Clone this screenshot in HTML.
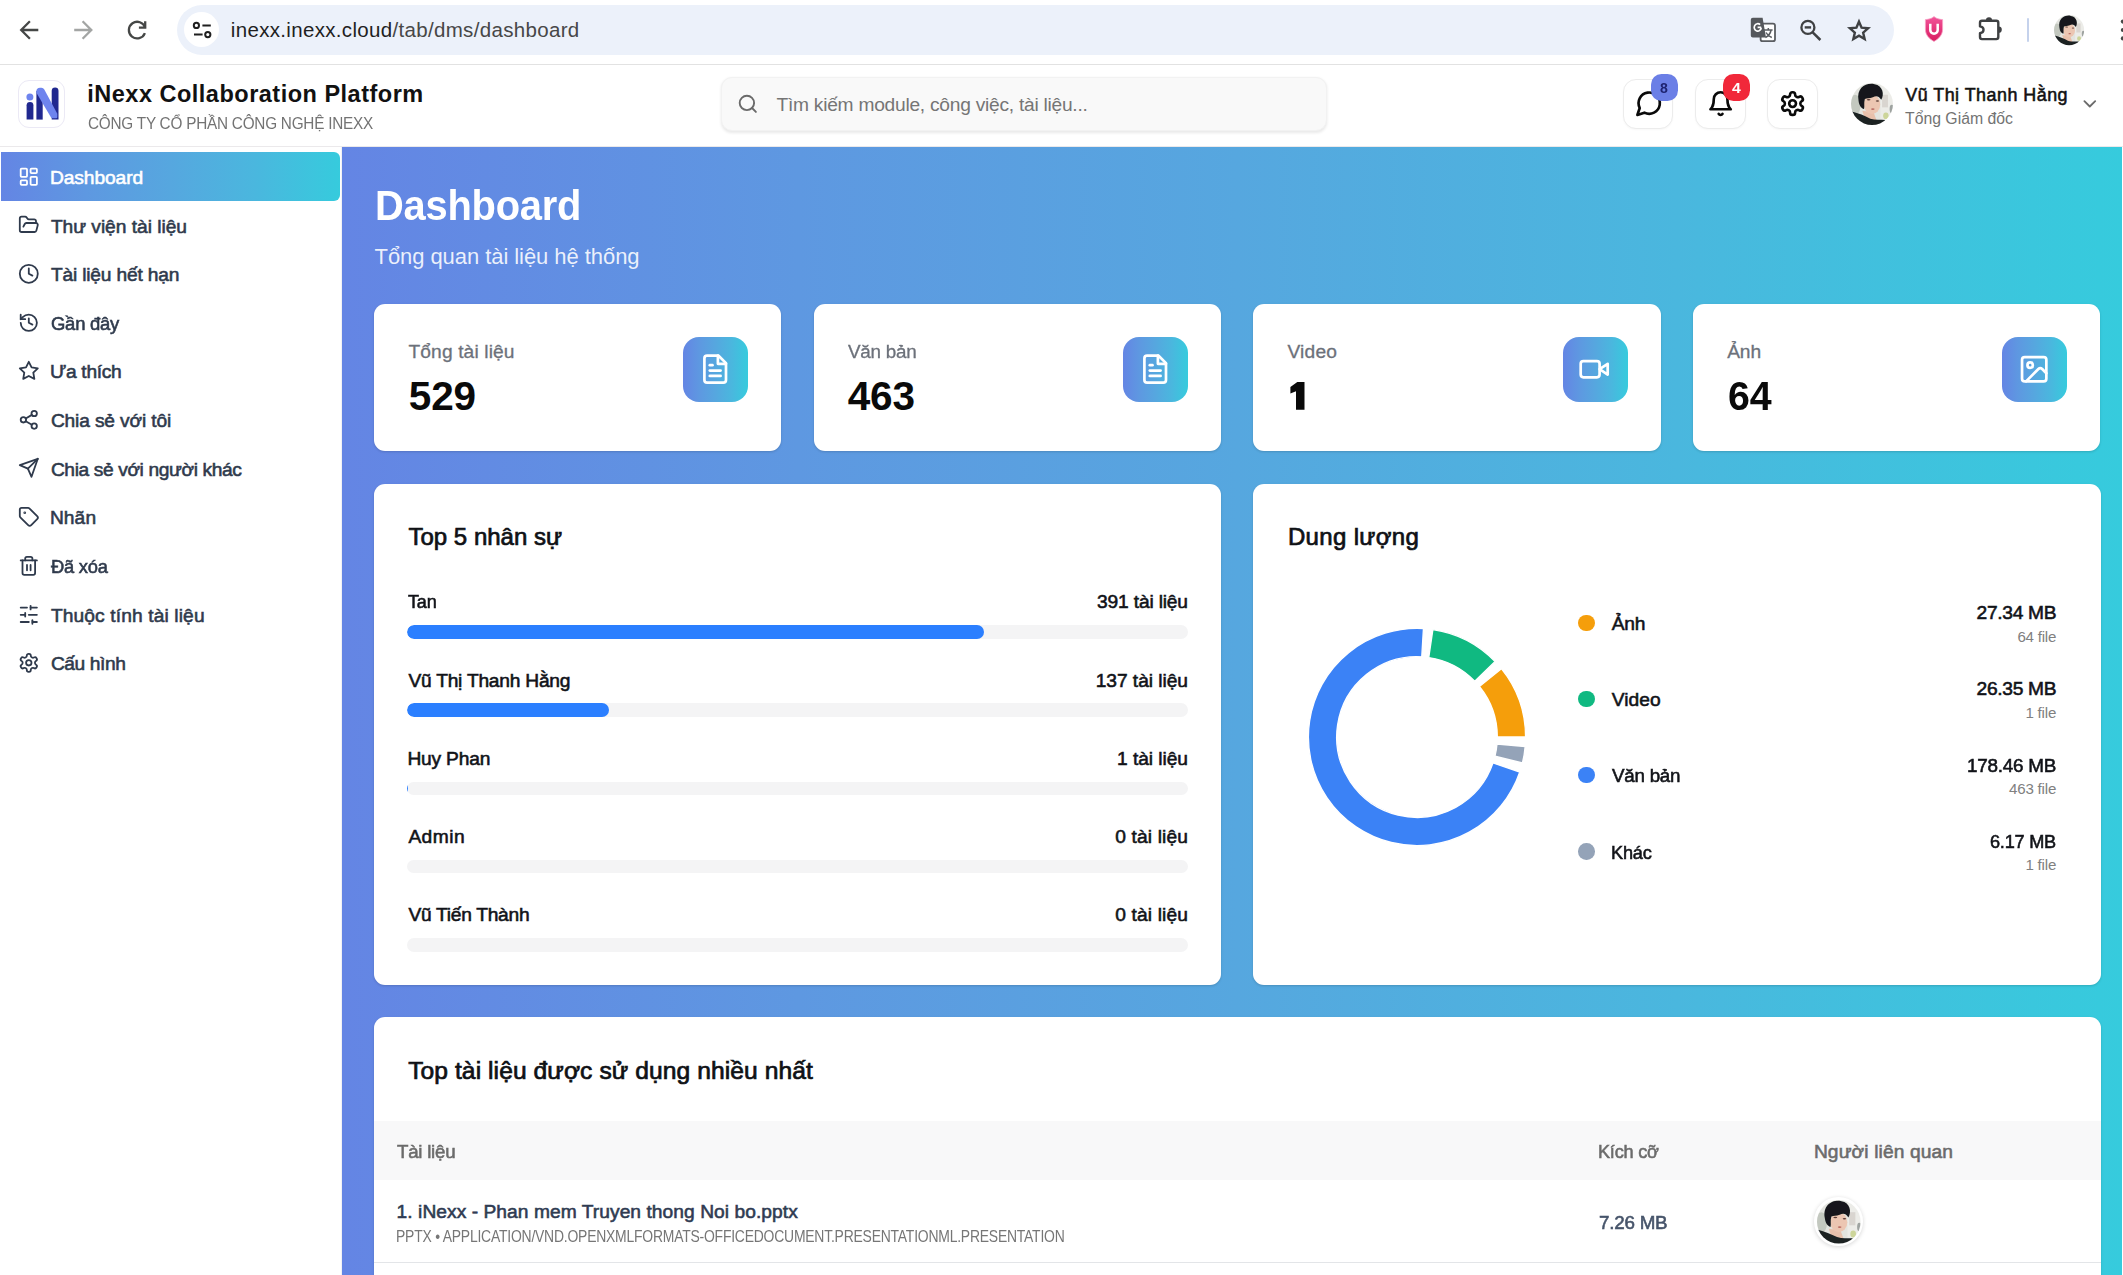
<!DOCTYPE html>
<html lang="vi"><head><meta charset="utf-8"><title>iNexx Collaboration Platform - Dashboard</title>
<style>
*{box-sizing:border-box;margin:0;padding:0}
html,body{width:2123px;height:1275px;overflow:hidden;background:#fff;font-family:"Liberation Sans",sans-serif}
body{position:relative}
.t{position:absolute;white-space:nowrap;line-height:1;-webkit-text-stroke-color:currentColor}
.a{position:absolute}
.card{position:absolute;background:#fff;border-radius:11px;box-shadow:0 1px 3px rgba(0,0,0,.10),0 1px 2px rgba(0,0,0,.06)}
.ib{position:absolute;width:64.8px;height:64.8px;border-radius:16px;background:linear-gradient(90deg,#6485e4 0%,#5e98e1 25%,#56a7df 50%,#4ab7de 75%,#36cbdd 100%)}
.hb{position:absolute;top:79px;width:50.2px;height:49.6px;border-radius:13px;border:1px solid #ececec;background:#fff;box-shadow:0 1px 2px rgba(0,0,0,.03)}
.trk{position:absolute;left:406.9px;width:781.1px;height:13.6px;border-radius:7px;background:#f4f4f5;overflow:hidden}
.trk i{display:block;height:100%;border-radius:7px;background:#2b7fff}
.dot{position:absolute;width:16.6px;height:16.6px;border-radius:50%;left:1578.1px}
svg{position:absolute;overflow:visible}
</style></head><body>
<div class="a" style="left:0;top:0;width:2123px;height:64px;background:#fff"></div>
<div class="a" style="left:0;top:64px;width:2123px;height:1px;background:#e2e2e2"></div>
<svg style="left:0;top:0" width="170" height="64" viewBox="0 0 170 64" fill="none" stroke-width="2.3" stroke-linecap="butt" stroke-linejoin="miter"><path d="M38.3 30H21.5M29.9 21.3L21.2 30l8.7 8.7" stroke="#454746"/><path d="M74.2 30H91M82.6 21.3l8.7 8.7-8.7 8.7" stroke="#a3a5a4"/></svg>
<svg style="left:120px;top:14px" width="34" height="34" viewBox="120 14 34 34" fill="none" stroke="#454746" stroke-width="2.3"><path d="M144.900 33.100A8.300 8.300 0 1 1 145.100 27.600"/><path d="M145.200 21.200V27.700H138.900"/></svg>
<div class="a" style="left:177px;top:4.5px;width:1717px;height:50px;border-radius:25px;background:#ecf1fa"></div>
<div class="a" style="left:184px;top:12px;width:35.4px;height:35.4px;border-radius:50%;background:#fff"></div>
<svg style="left:184px;top:12px" width="36" height="36" viewBox="184 12 36 36" fill="none" stroke="#1f1f1f" stroke-width="2"><circle cx="196.4" cy="25.4" r="2.6"/><path d="M202.4 25.4h8.4M194 34.6h8.6"/><circle cx="207.8" cy="34.6" r="2.6"/></svg>
<svg style="left:1748px;top:14px" width="32" height="32" viewBox="1748 14 32 32"><rect x="1760.6" y="23.6" width="14.4" height="17.6" rx="2" fill="#fff" stroke="#5a5d61" stroke-width="1.8"/><path d="M1764 30h8.6M1768.3 28v2M1765.5 37.5c3-1.6 5-4.2 5.6-7.5M1766 32.5c1 2 3 4 5.8 5" fill="none" stroke="#5a5d61" stroke-width="1.5"/><path d="M1752.8 17.8h9.8l3.4 19.8h-13.2a2 2 0 0 1-2-2v-15.8a2 2 0 0 1 2-2z" fill="#55585c"/><path d="M1761.2 27.4h-3.6M1761.2 27.6a3.5 3.7 0 1 1-1.1-2.9" fill="none" stroke="#fff" stroke-width="1.7"/></svg>
<svg style="left:1795px;top:15px" width="32" height="32" viewBox="1795 15 32 32" fill="none" stroke="#3f4143" stroke-width="2.3"><circle cx="1807.9" cy="27.4" r="6.500"/><path d="M1812.7 32.4l7.700 7.600" stroke-width="2.500"/><path d="M1804.700 27.400h6.400" stroke-width="2.400"/></svg>
<svg style="left:1845.8px;top:16.6px" width="26" height="26" viewBox="0 0 24 24" fill="none" stroke="#3f4143" stroke-width="2.25" stroke-linejoin="miter"><path d="M12 4.300l2.400 5.600 6 .550-4.550 4 1.350 5.900L12 17.200l-5.200 3.150 1.350-5.900-4.550-4 6-.550z"/></svg>
<svg style="left:1922px;top:15px" width="24" height="28" viewBox="1922 15 24 28"><defs><linearGradient id="sh" x1="0" y1="0" x2="0" y2="1"><stop offset="0" stop-color="#f2559a"/><stop offset="1" stop-color="#d81b60"/></linearGradient></defs><path d="M1934 16.600c-2.800 2.400-6 2.700-8.600 3v9.600c0 6.100 4.400 9.900 8.600 12.200 4.200-2.300 8.600-6.100 8.600-12.200v-9.600c-2.600-.3-5.800-.6-8.600-3z" fill="url(#sh)" stroke="#f7a3c6" stroke-width="0.8"/><path d="M1930.300 23.800v6.200a3.700 3.700 0 0 0 7.400 0v-6.200" fill="none" stroke="#fff" stroke-width="2.5"/></svg>
<svg style="left:1974px;top:12px" width="32" height="32" viewBox="1974 12 32 32"><path d="M1982 20.700h14.300a2 2 0 0 1 2 2v14.400a2 2 0 0 1-2 2h-14.300a2 2 0 0 1-2-2v-3.900c4.700-.600 4.700-6.200 0-6.800v-3.700a2 2 0 0 1 2-2z" fill="none" stroke="#3f4143" stroke-width="2.400" stroke-linejoin="round"/><path d="M1985.900 20.300a3.100 3.100 0 0 1 6.200 0z" fill="#3f4143"/><path d="M1998.700 26.600a3.100 3.100 0 0 1 0 6.200z" fill="#3f4143"/></svg>
<div class="a" style="left:2026.8px;top:18px;width:2.2px;height:23.5px;border-radius:1px;background:#c5d2ec"></div>
<svg style="left:2053.90px;top:14.90px" width="30.20" height="30.20" viewBox="0 0 100 100"><defs><clipPath id="av2069_30"><circle cx="50" cy="50" r="50"/></clipPath><filter id="fav2069_30" x="-10%" y="-10%" width="120%" height="120%"><feGaussianBlur stdDeviation="1.500"/></filter></defs><g clip-path="url(#av2069_30)"><g filter="url(#fav2069_30)"><rect width="100" height="100" fill="#e3e4df"/><rect x="70" y="0" width="30" height="100" fill="#ecece8"/><ellipse cx="10" cy="52" rx="13" ry="24" fill="#c3c8bf"/><rect x="74" y="28" width="14" height="30" fill="#d9d5d0"/><ellipse cx="83" cy="78" rx="6.500" ry="8" fill="#cdd59a"/><ellipse cx="97" cy="62" rx="5" ry="10" fill="#9ea3a0"/><path d="M27 66 L54 70 L62 92 L34 88 Z" fill="#e8c0ab"/><path d="M2 68 C18 72 32 78 46 85 C58 89 70 87 82 88 L80 110 L-5 110 Z" fill="#1a2024"/><ellipse cx="50" cy="51" rx="19.5" ry="23" fill="#ecc6b2"/><path d="M18 42 C12 10 38 -2 56 3 C76 6 80 28 72 40 C66 31 60 30 52 34 C44 37 38 36 33 38 C30 48 33 56 31 62 C24 60 19 52 18 42 Z" fill="#14191b"/><ellipse cx="42" cy="40" rx="4.5" ry="1.8" fill="#5b3d36"/><ellipse cx="63" cy="43" rx="4" ry="1.700" fill="#5b3d36"/><ellipse cx="52" cy="62" rx="4.2" ry="2" fill="#b96d64"/></g></g></svg>

<svg style="left:2116px;top:15px" width="7" height="32" viewBox="2116 15 7 32" fill="#454746"><circle cx="2122.900" cy="21.600" r="2.100"/><circle cx="2122.900" cy="30" r="2.100"/><circle cx="2122.900" cy="38.400" r="2.100"/></svg>
<div class="a" style="left:0;top:146px;width:2123px;height:1px;background:#ebe9eb"></div>
<div class="a" style="left:18.4px;top:80.1px;width:46.9px;height:47.6px;border-radius:11px;border:1px solid #ebe9f5;background:#fff"></div>
<svg style="left:19px;top:80.1px" width="47" height="48" viewBox="18.4 80.1 47 48"><path d="M26 105.400a3.400 3.400 0 0 1 6.800 0v14.300h-6.800z" fill="#20288f"/><circle cx="29.300" cy="97.100" r="3.500" fill="#6e84ee"/><path d="M35.800 91h6.300v28.700h-6.300z" fill="#20288f"/><path d="M51.100 91a3.400 3.400 0 0 1 6.800 0v28.700h-6.800z" fill="#20288f"/><path d="M35.800 91.400q0-3.600 3.600-3.600h1.500q1.800 0 2.800 1.800l13 24.200v3.400q0 1.200-1.200 1.200h-3.600q-1 0-1.600-1l-14.500-24.600z" fill="#6e84ee"/></svg>
<div class="a" style="left:720.5px;top:76.5px;width:606px;height:54.8px;border-radius:11px;background:#f9f9f9;border:1px solid #f2f2f2;box-shadow:0 1.5px 3px rgba(0,0,0,.09)"></div>
<svg style="left:737.20px;top:93.20px;color:#6a6a6a" width="21.60" height="21.60" viewBox="0 0 24 24" fill="none" stroke="currentColor" stroke-width="2.1" stroke-linecap="round" stroke-linejoin="round"><circle cx="11" cy="11" r="8"/><path d="m21 21-4.3-4.3"/></svg>

<div class="hb" style="left:1623.3px"></div>
<div class="hb" style="left:1695.4px"></div>
<div class="hb" style="left:1767.4px"></div>
<svg style="left:1634.60px;top:89.40px;color:#0a0a0a" width="28.40" height="28.40" viewBox="0 0 24 24" fill="none" stroke="currentColor" stroke-width="2.25" stroke-linecap="round" stroke-linejoin="round"><path d="M7.9 20A9 9 0 1 0 4 16.1L2 22Z"/></svg>

<svg style="left:1707.00px;top:89.90px;color:#0a0a0a" width="27.20" height="27.20" viewBox="0 0 24 24" fill="none" stroke="currentColor" stroke-width="2.3" stroke-linecap="round" stroke-linejoin="round"><path d="M6 8a6 6 0 0 1 12 0c0 7 3 9 3 9H3s3-2 3-9"/><path d="M10.3 21a1.94 1.94 0 0 0 3.4 0"/></svg>

<svg style="left:1778.90px;top:90.00px;color:#0a0a0a" width="27.20" height="27.20" viewBox="0 0 24 24" fill="none" stroke="currentColor" stroke-width="2.3" stroke-linecap="round" stroke-linejoin="round"><path d="M12.22 2h-.44a2 2 0 0 0-2 2v.18a2 2 0 0 1-1 1.73l-.43.25a2 2 0 0 1-2 0l-.15-.08a2 2 0 0 0-2.73.73l-.22.38a2 2 0 0 0 .73 2.73l.15.1a2 2 0 0 1 1 1.72v.51a2 2 0 0 1-1 1.74l-.15.09a2 2 0 0 0-.73 2.73l.22.38a2 2 0 0 0 2.73.73l.15-.08a2 2 0 0 1 2 0l.43.25a2 2 0 0 1 1 1.73V20a2 2 0 0 0 2 2h.44a2 2 0 0 0 2-2v-.18a2 2 0 0 1 1-1.73l.43-.25a2 2 0 0 1 2 0l.15.08a2 2 0 0 0 2.73-.73l.22-.39a2 2 0 0 0-.73-2.73l-.15-.08a2 2 0 0 1-1-1.74v-.5a2 2 0 0 1 1-1.74l.15-.09a2 2 0 0 0 .73-2.73l-.22-.38a2 2 0 0 0-2.73-.73l-.15.08a2 2 0 0 1-2 0l-.43-.25a2 2 0 0 1-1-1.73V4a2 2 0 0 0-2-2z"/><circle cx="12" cy="12" r="3"/></svg>

<div class="a" style="left:1650.9px;top:74.2px;width:26.8px;height:26.5px;border-radius:10.5px;background:#6b7fe6"></div>
<div class="a" style="left:1722.9px;top:74.2px;width:26.8px;height:26.5px;border-radius:10.5px;background:#f1283a"></div>
<svg style="left:1850.90px;top:82.50px" width="42.00" height="42.00" viewBox="0 0 100 100"><defs><clipPath id="av1871_103"><circle cx="50" cy="50" r="50"/></clipPath><filter id="fav1871_103" x="-10%" y="-10%" width="120%" height="120%"><feGaussianBlur stdDeviation="1.500"/></filter></defs><g clip-path="url(#av1871_103)"><g filter="url(#fav1871_103)"><rect width="100" height="100" fill="#e3e4df"/><rect x="70" y="0" width="30" height="100" fill="#ecece8"/><ellipse cx="10" cy="52" rx="13" ry="24" fill="#c3c8bf"/><rect x="74" y="28" width="14" height="30" fill="#d9d5d0"/><ellipse cx="83" cy="78" rx="6.500" ry="8" fill="#cdd59a"/><ellipse cx="97" cy="62" rx="5" ry="10" fill="#9ea3a0"/><path d="M27 66 L54 70 L62 92 L34 88 Z" fill="#e8c0ab"/><path d="M2 68 C18 72 32 78 46 85 C58 89 70 87 82 88 L80 110 L-5 110 Z" fill="#1a2024"/><ellipse cx="50" cy="51" rx="19.5" ry="23" fill="#ecc6b2"/><path d="M18 42 C12 10 38 -2 56 3 C76 6 80 28 72 40 C66 31 60 30 52 34 C44 37 38 36 33 38 C30 48 33 56 31 62 C24 60 19 52 18 42 Z" fill="#14191b"/><ellipse cx="42" cy="40" rx="4.5" ry="1.8" fill="#5b3d36"/><ellipse cx="63" cy="43" rx="4" ry="1.700" fill="#5b3d36"/><ellipse cx="52" cy="62" rx="4.2" ry="2" fill="#b96d64"/></g></g></svg>

<svg style="left:2078.60px;top:93.00px;color:#6b6b6b" width="21.60" height="21.60" viewBox="0 0 24 24" fill="none" stroke="currentColor" stroke-width="2" stroke-linecap="round" stroke-linejoin="round"><path d="m6 9 6 6 6-6"/></svg>

<div class="a" style="left:341px;top:147px;width:1px;height:1128px;background:#f1f2f4"></div>
<div class="a" style="left:1.2px;top:152px;width:338.8px;height:48.8px;border-radius:0 6px 6px 0;background:linear-gradient(90deg,#6485e4 0%,#5e98e1 25%,#56a7df 50%,#4ab7de 75%,#36cbdd 100%)"></div>
<svg style="left:17.90px;top:166.00px;color:#ffffff" width="21.60" height="21.60" viewBox="0 0 24 24" fill="none" stroke="currentColor" stroke-width="2" stroke-linecap="round" stroke-linejoin="round"><rect width="7" height="9" x="3" y="3" rx="1"/><rect width="7" height="5" x="14" y="3" rx="1"/><rect width="7" height="9" x="14" y="12" rx="1"/><rect width="7" height="5" x="3" y="16" rx="1"/></svg>

<svg style="left:17.90px;top:213.63px;color:#2f3a4c" width="21.60" height="21.60" viewBox="0 0 24 24" fill="none" stroke="currentColor" stroke-width="2" stroke-linecap="round" stroke-linejoin="round"><path d="m6 14 1.5-2.9A2 2 0 0 1 9.24 10H20a2 2 0 0 1 1.94 2.5l-1.54 6a2 2 0 0 1-1.95 1.5H4a2 2 0 0 1-2-2V5a2 2 0 0 1 2-2h3.9a2 2 0 0 1 1.69.9l.81 1.2a2 2 0 0 0 1.67.9H18a2 2 0 0 1 2 2v2"/></svg>

<svg style="left:17.90px;top:263.26px;color:#2f3a4c" width="21.60" height="21.60" viewBox="0 0 24 24" fill="none" stroke="currentColor" stroke-width="2" stroke-linecap="round" stroke-linejoin="round"><circle cx="12" cy="12" r="10"/><polyline points="12 6 12 12 16 14"/></svg>

<svg style="left:17.90px;top:311.89px;color:#2f3a4c" width="21.60" height="21.60" viewBox="0 0 24 24" fill="none" stroke="currentColor" stroke-width="2" stroke-linecap="round" stroke-linejoin="round"><path d="M3 12a9 9 0 1 0 9-9 9.75 9.75 0 0 0-6.74 2.74L3 8"/><path d="M3 3v5h5"/><path d="M12 7v5l4 2"/></svg>

<svg style="left:17.90px;top:359.72px;color:#2f3a4c" width="21.60" height="21.60" viewBox="0 0 24 24" fill="none" stroke="currentColor" stroke-width="2" stroke-linecap="round" stroke-linejoin="round"><polygon points="12 2 15.09 8.26 22 9.27 17 14.14 18.18 21.02 12 17.77 5.82 21.02 7 14.14 2 9.27 8.91 8.26 12 2"/></svg>

<svg style="left:17.90px;top:408.85px;color:#2f3a4c" width="21.60" height="21.60" viewBox="0 0 24 24" fill="none" stroke="currentColor" stroke-width="2" stroke-linecap="round" stroke-linejoin="round"><circle cx="18" cy="5" r="3"/><circle cx="6" cy="12" r="3"/><circle cx="18" cy="19" r="3"/><line x1="8.59" x2="15.42" y1="13.51" y2="17.49"/><line x1="15.41" x2="8.59" y1="6.51" y2="10.49"/></svg>

<svg style="left:17.90px;top:456.78px;color:#2f3a4c" width="21.60" height="21.60" viewBox="0 0 24 24" fill="none" stroke="currentColor" stroke-width="2" stroke-linecap="round" stroke-linejoin="round"><path d="m22 2-7 20-4-9-9-4Z"/><path d="M22 2 11 13"/></svg>

<svg style="left:17.90px;top:505.51px;color:#2f3a4c" width="21.60" height="21.60" viewBox="0 0 24 24" fill="none" stroke="currentColor" stroke-width="2" stroke-linecap="round" stroke-linejoin="round"><path d="M12.586 2.586A2 2 0 0 0 11.172 2H4a2 2 0 0 0-2 2v7.172a2 2 0 0 0 .586 1.414l8.704 8.704a2.426 2.426 0 0 0 3.42 0l6.58-6.58a2.426 2.426 0 0 0 0-3.42z"/><circle cx="7.5" cy="7.5" r=".5" fill="currentColor"/></svg>

<svg style="left:17.90px;top:555.04px;color:#2f3a4c" width="21.60" height="21.60" viewBox="0 0 24 24" fill="none" stroke="currentColor" stroke-width="2" stroke-linecap="round" stroke-linejoin="round"><path d="M3 6h18"/><path d="M19 6v14c0 1-1 2-2 2H7c-1 0-2-1-2-2V6"/><path d="M8 6V4c0-1 1-2 2-2h4c1 0 2 1 2 2v2"/><line x1="10" x2="10" y1="11" y2="17"/><line x1="14" x2="14" y1="11" y2="17"/></svg>

<svg style="left:17.90px;top:603.67px;color:#2f3a4c" width="21.60" height="21.60" viewBox="0 0 24 24" fill="none" stroke="currentColor" stroke-width="2" stroke-linecap="round" stroke-linejoin="round"><line x1="21" x2="14" y1="4" y2="4"/><line x1="10" x2="3" y1="4" y2="4"/><line x1="21" x2="12" y1="12" y2="12"/><line x1="8" x2="3" y1="12" y2="12"/><line x1="21" x2="16" y1="20" y2="20"/><line x1="12" x2="3" y1="20" y2="20"/><line x1="14" x2="14" y1="2" y2="6"/><line x1="8" x2="8" y1="10" y2="14"/><line x1="16" x2="16" y1="18" y2="22"/></svg>

<svg style="left:17.90px;top:652.30px;color:#2f3a4c" width="21.60" height="21.60" viewBox="0 0 24 24" fill="none" stroke="currentColor" stroke-width="2" stroke-linecap="round" stroke-linejoin="round"><path d="M12.22 2h-.44a2 2 0 0 0-2 2v.18a2 2 0 0 1-1 1.73l-.43.25a2 2 0 0 1-2 0l-.15-.08a2 2 0 0 0-2.73.73l-.22.38a2 2 0 0 0 .73 2.73l.15.1a2 2 0 0 1 1 1.72v.51a2 2 0 0 1-1 1.74l-.15.09a2 2 0 0 0-.73 2.73l.22.38a2 2 0 0 0 2.73.73l.15-.08a2 2 0 0 1 2 0l.43.25a2 2 0 0 1 1 1.73V20a2 2 0 0 0 2 2h.44a2 2 0 0 0 2-2v-.18a2 2 0 0 1 1-1.73l.43-.25a2 2 0 0 1 2 0l.15.08a2 2 0 0 0 2.73-.73l.22-.39a2 2 0 0 0-.73-2.73l-.15-.08a2 2 0 0 1-1-1.74v-.5a2 2 0 0 1 1-1.74l.15-.09a2 2 0 0 0 .73-2.73l-.22-.38a2 2 0 0 0-2.73-.73l-.15.08a2 2 0 0 1-2 0l-.43-.25a2 2 0 0 1-1-1.73V4a2 2 0 0 0-2-2z"/><circle cx="12" cy="12" r="3"/></svg>

<div class="a" style="left:342px;top:147px;width:1780px;height:1128px;background:linear-gradient(90deg,#6485e4 0%,#5e98e1 25.6%,#56a7df 50.3%,#4ab7de 75%,#36cbdd 100%)"></div>
<div class="card" style="left:374.00px;top:304.2px;width:407.3px;height:146.8px"></div>
<div class="ib" style="left:683.40px;top:336.8px"></div>
<svg style="left:698.90px;top:352.80px;color:#ffffff" width="32.40" height="32.40" viewBox="0 0 24 24" fill="none" stroke="currentColor" stroke-width="2" stroke-linecap="round" stroke-linejoin="round"><path d="M14.5 2H6a2 2 0 0 0-2 2v16a2 2 0 0 0 2 2h12a2 2 0 0 0 2-2V7.5L14.5 2z"/><polyline points="14 2 14 8 20 8"/><line x1="16" x2="8" y1="13" y2="13"/><line x1="16" x2="8" y1="17" y2="17"/><line x1="10" x2="8" y1="9" y2="9"/></svg>

<div class="card" style="left:813.67px;top:304.2px;width:407.3px;height:146.8px"></div>
<div class="ib" style="left:1123.07px;top:336.8px"></div>
<svg style="left:1138.57px;top:352.80px;color:#ffffff" width="32.40" height="32.40" viewBox="0 0 24 24" fill="none" stroke="currentColor" stroke-width="2" stroke-linecap="round" stroke-linejoin="round"><path d="M14.5 2H6a2 2 0 0 0-2 2v16a2 2 0 0 0 2 2h12a2 2 0 0 0 2-2V7.5L14.5 2z"/><polyline points="14 2 14 8 20 8"/><line x1="16" x2="8" y1="13" y2="13"/><line x1="16" x2="8" y1="17" y2="17"/><line x1="10" x2="8" y1="9" y2="9"/></svg>

<div class="card" style="left:1253.34px;top:304.2px;width:407.3px;height:146.8px"></div>
<div class="ib" style="left:1562.74px;top:336.8px"></div>
<svg style="left:1578.24px;top:352.80px;color:#ffffff" width="32.40" height="32.40" viewBox="0 0 24 24" fill="none" stroke="currentColor" stroke-width="2" stroke-linecap="round" stroke-linejoin="round"><path d="m22 8-6 4 6 4V8Z"/><rect width="14" height="12" x="2" y="6" rx="2" ry="2"/></svg>

<div class="card" style="left:1693.01px;top:304.2px;width:407.3px;height:146.8px"></div>
<div class="ib" style="left:2002.41px;top:336.8px"></div>
<svg style="left:2017.91px;top:352.80px;color:#ffffff" width="32.40" height="32.40" viewBox="0 0 24 24" fill="none" stroke="currentColor" stroke-width="2" stroke-linecap="round" stroke-linejoin="round"><rect width="18" height="18" x="3" y="3" rx="2" ry="2"/><circle cx="9" cy="9" r="2"/><path d="m21 15-3.086-3.086a2 2 0 0 0-2.828 0L6 21"/></svg>

<div class="card" style="left:374px;top:484px;width:847px;height:501.3px"></div>
<div class="card" style="left:1252.7px;top:484px;width:848.3px;height:501.3px"></div>
<div class="card" style="left:374px;top:1017px;width:1727px;height:300px"></div>
<svg style="left:1286px;top:378px" width="24" height="36" viewBox="1286 378 24 36"><path d="M1297.300 382h7.200v27.700h-8.500v-18.500l-5.600 2.300v-6.600z" fill="#0a0a0a"/></svg>
<div class="trk" style="top:625.10px"><i style="width:73.913%"></i></div>
<div class="trk" style="top:703.35px"><i style="width:25.898%"></i></div>
<div class="trk" style="top:781.60px"><i style="width:0.189%"></i></div>
<div class="trk" style="top:859.85px"><i style="width:0.000%"></i></div>
<div class="trk" style="top:938.10px"><i style="width:0.000%"></i></div>
<svg style="left:1301.5px;top:621.5px" width="230" height="230" viewBox="1301.5 621.5 230 230"><path d="M1525.10 736.50A108.6 108.6 0 0 0 1500.89 668.15L1478.90 685.96A80.3 80.3 0 0 1 1496.80 736.50Z" fill="#f59e0b" stroke="#fff" stroke-width="1.35"/><path d="M1494.61 661.05A108.6 108.6 0 0 0 1432.37 629.07L1428.23 657.06A80.3 80.3 0 0 1 1474.26 680.71Z" fill="#10b981" stroke="#fff" stroke-width="1.35"/><path d="M1422.95 628.09A108.6 108.6 0 1 0 1519.30 771.50L1492.51 762.38A80.3 80.3 0 1 1 1421.27 656.34Z" fill="#3b82f6" stroke="#fff" stroke-width="1.35"/><path d="M1521.96 762.41A108.6 108.6 0 0 0 1524.69 745.97L1496.49 743.50A80.3 80.3 0 0 1 1494.48 755.66Z" fill="#94a3b8" stroke="#fff" stroke-width="1.35"/></svg>
<div class="dot" style="top:614.70px;background:#f59e0b"></div>
<div class="dot" style="top:690.70px;background:#10b981"></div>
<div class="dot" style="top:766.70px;background:#3b82f6"></div>
<div class="dot" style="top:843.00px;background:#94a3b8"></div>
<div class="a" style="left:374px;top:1121.2px;width:1727px;height:58.4px;background:#f8f8f9"></div>
<div class="a" style="left:374px;top:1262px;width:1727px;height:1px;background:#e3e5e8"></div>
<div class="a" style="left:1814.2px;top:1197px;width:48.6px;height:48.6px;border-radius:50%;background:#fff;box-shadow:0 1px 4px rgba(0,0,0,.16)"></div>
<svg style="left:1816.70px;top:1199.50px" width="43.60" height="43.60" viewBox="0 0 100 100"><defs><clipPath id="av1838_1221"><circle cx="50" cy="50" r="50"/></clipPath><filter id="fav1838_1221" x="-10%" y="-10%" width="120%" height="120%"><feGaussianBlur stdDeviation="1.500"/></filter></defs><g clip-path="url(#av1838_1221)"><g filter="url(#fav1838_1221)"><rect width="100" height="100" fill="#e3e4df"/><rect x="70" y="0" width="30" height="100" fill="#ecece8"/><ellipse cx="10" cy="52" rx="13" ry="24" fill="#c3c8bf"/><rect x="74" y="28" width="14" height="30" fill="#d9d5d0"/><ellipse cx="83" cy="78" rx="6.500" ry="8" fill="#cdd59a"/><ellipse cx="97" cy="62" rx="5" ry="10" fill="#9ea3a0"/><path d="M27 66 L54 70 L62 92 L34 88 Z" fill="#e8c0ab"/><path d="M2 68 C18 72 32 78 46 85 C58 89 70 87 82 88 L80 110 L-5 110 Z" fill="#1a2024"/><ellipse cx="50" cy="51" rx="19.5" ry="23" fill="#ecc6b2"/><path d="M18 42 C12 10 38 -2 56 3 C76 6 80 28 72 40 C66 31 60 30 52 34 C44 37 38 36 33 38 C30 48 33 56 31 62 C24 60 19 52 18 42 Z" fill="#14191b"/><ellipse cx="42" cy="40" rx="4.5" ry="1.8" fill="#5b3d36"/><ellipse cx="63" cy="43" rx="4" ry="1.700" fill="#5b3d36"/><ellipse cx="52" cy="62" rx="4.2" ry="2" fill="#b96d64"/></g></g></svg>

<div class="t" style="left:230.80px;top:20.00px;font-size:20.50px;color:#474747;letter-spacing:0.326px;"><span style="color:#1f1f1f">inexx.inexx.cloud</span>/tab/dms/dashboard</div>
<div class="t" style="left:87.30px;top:83.00px;font-size:23.50px;color:#111111;letter-spacing:0.495px;font-weight:bold;">iNexx Collaboration Platform</div>
<div class="t" style="left:88.30px;top:115.00px;font-size:16.20px;color:#737373;letter-spacing:-0.250px;transform:scaleX(0.9467);transform-origin:0 0;">CÔNG TY CỔ PHẦN CÔNG NGHỆ INEXX</div>
<div class="t" style="left:776.50px;top:95.00px;font-size:19.20px;color:#757575;letter-spacing:-0.254px;">Tìm kiếm module, công việc, tài liệu...</div>
<div class="t" style="left:1905.27px;top:87.00px;font-size:17.90px;color:#111111;letter-spacing:0.485px;-webkit-text-stroke:0.54px;">Vũ Thị Thanh Hằng</div>
<div class="t" style="left:1905.00px;top:111.00px;font-size:15.80px;color:#737373;letter-spacing:-0.008px;">Tổng Giám đốc</div>
<div class="t" style="left:1660.30px;top:80.00px;font-size:15.50px;color:#1e2370;letter-spacing:0.000px;transform:scaleX(0.9111);transform-origin:0 0;font-weight:bold;">8</div>
<div class="t" style="left:1731.80px;top:80.00px;font-size:15.50px;color:#ffffff;letter-spacing:0.000px;transform:scaleX(1.0222);transform-origin:0 0;font-weight:bold;">4</div>
<div class="t" style="left:49.89px;top:168.00px;font-size:19.20px;color:#ffffff;letter-spacing:-0.071px;-webkit-text-stroke:0.58px;">Dashboard</div>
<div class="t" style="left:50.89px;top:217.00px;font-size:19.20px;color:#2f3a4c;letter-spacing:-0.029px;-webkit-text-stroke:0.58px;">Thư viện tài liệu</div>
<div class="t" style="left:50.89px;top:265.00px;font-size:19.20px;color:#2f3a4c;letter-spacing:-0.174px;-webkit-text-stroke:0.58px;">Tài liệu hết hạn</div>
<div class="t" style="left:50.88px;top:314.00px;font-size:19.20px;color:#2f3a4c;letter-spacing:-0.250px;transform:scaleX(0.9623);transform-origin:0 0;-webkit-text-stroke:0.58px;">Gần đây</div>
<div class="t" style="left:49.89px;top:362.00px;font-size:19.20px;color:#2f3a4c;letter-spacing:-0.299px;-webkit-text-stroke:0.58px;">Ưa thích</div>
<div class="t" style="left:50.89px;top:411.00px;font-size:19.20px;color:#2f3a4c;letter-spacing:-0.153px;-webkit-text-stroke:0.58px;">Chia sẻ với tôi</div>
<div class="t" style="left:50.89px;top:460.00px;font-size:19.20px;color:#2f3a4c;letter-spacing:-0.383px;-webkit-text-stroke:0.58px;">Chia sẻ với người khác</div>
<div class="t" style="left:49.89px;top:508.00px;font-size:19.20px;color:#2f3a4c;letter-spacing:0.108px;-webkit-text-stroke:0.58px;">Nhãn</div>
<div class="t" style="left:50.88px;top:557.00px;font-size:19.20px;color:#2f3a4c;letter-spacing:-0.250px;transform:scaleX(0.9562);transform-origin:0 0;-webkit-text-stroke:0.58px;">Đã xóa</div>
<div class="t" style="left:50.89px;top:606.00px;font-size:19.20px;color:#2f3a4c;letter-spacing:0.124px;-webkit-text-stroke:0.58px;">Thuộc tính tài liệu</div>
<div class="t" style="left:50.89px;top:654.00px;font-size:19.20px;color:#2f3a4c;letter-spacing:-0.397px;-webkit-text-stroke:0.58px;">Cấu hình</div>
<div class="t" style="left:374.60px;top:185.00px;font-size:42.00px;color:#ffffff;letter-spacing:-0.250px;transform:scaleX(0.9496);transform-origin:0 0;font-weight:bold;">Dashboard</div>
<div class="t" style="left:374.50px;top:246.00px;font-size:22.00px;color:rgba(255,255,255,0.88);letter-spacing:-0.062px;">Tổng quan tài liệu hệ thống</div>
<div class="t" style="left:408.45px;top:342.00px;font-size:19.20px;color:#6c717a;letter-spacing:0.128px;-webkit-text-stroke:0.31px;">Tổng tài liệu</div>
<div class="t" style="left:408.80px;top:376.00px;font-size:40.50px;color:#0a0a0a;letter-spacing:-0.124px;font-weight:bold;">529</div>
<div class="t" style="left:847.95px;top:342.00px;font-size:19.20px;color:#6c717a;letter-spacing:-0.250px;transform:scaleX(0.9825);transform-origin:0 0;-webkit-text-stroke:0.31px;">Văn bản</div>
<div class="t" style="left:847.80px;top:376.00px;font-size:40.50px;color:#0a0a0a;letter-spacing:-0.224px;font-weight:bold;">463</div>
<div class="t" style="left:1287.45px;top:342.00px;font-size:19.20px;color:#6c717a;letter-spacing:0.209px;-webkit-text-stroke:0.31px;">Video</div>
<div class="t" style="left:1288.98px;top:376.00px;font-size:40.50px;color:transparent;letter-spacing:0.000px;transform:scaleX(0.7100);transform-origin:0 0;font-weight:bold;">1</div>
<div class="t" style="left:1727.15px;top:342.00px;font-size:19.20px;color:#6c717a;letter-spacing:-0.088px;-webkit-text-stroke:0.31px;">Ảnh</div>
<div class="t" style="left:1727.83px;top:376.00px;font-size:40.50px;color:#0a0a0a;letter-spacing:-0.250px;transform:scaleX(0.9712);transform-origin:0 0;font-weight:bold;">64</div>
<div class="t" style="left:408.46px;top:525.00px;font-size:24.00px;color:#0f1115;letter-spacing:0.012px;-webkit-text-stroke:0.72px;">Top 5 nhân sự</div>
<div class="t" style="left:1287.96px;top:525.00px;font-size:24.00px;color:#0f1115;letter-spacing:0.328px;-webkit-text-stroke:0.72px;">Dung lượng</div>
<div class="t" style="left:408.37px;top:592.00px;font-size:19.20px;color:#111318;letter-spacing:-0.250px;transform:scaleX(0.9427);transform-origin:0 0;-webkit-text-stroke:0.58px;">Tan</div>
<div class="t" style="left:1097.09px;top:592.00px;font-size:19.20px;color:#111318;letter-spacing:-0.174px;-webkit-text-stroke:0.58px;">391 tài liệu</div>
<div class="t" style="left:408.39px;top:671.00px;font-size:19.20px;color:#111318;letter-spacing:-0.225px;-webkit-text-stroke:0.58px;">Vũ Thị Thanh Hằng</div>
<div class="t" style="left:1095.69px;top:671.00px;font-size:19.20px;color:#111318;letter-spacing:-0.047px;-webkit-text-stroke:0.58px;">137 tài liệu</div>
<div class="t" style="left:407.39px;top:749.00px;font-size:19.20px;color:#111318;letter-spacing:-0.181px;-webkit-text-stroke:0.58px;">Huy Phan</div>
<div class="t" style="left:1117.09px;top:749.00px;font-size:19.20px;color:#111318;letter-spacing:-0.063px;-webkit-text-stroke:0.58px;">1 tài liệu</div>
<div class="t" style="left:408.39px;top:827.00px;font-size:19.20px;color:#111318;letter-spacing:0.452px;-webkit-text-stroke:0.58px;">Admin</div>
<div class="t" style="left:1115.19px;top:827.00px;font-size:19.20px;color:#111318;letter-spacing:0.148px;-webkit-text-stroke:0.58px;">0 tài liệu</div>
<div class="t" style="left:408.39px;top:905.00px;font-size:19.20px;color:#111318;letter-spacing:-0.271px;-webkit-text-stroke:0.58px;">Vũ Tiến Thành</div>
<div class="t" style="left:1115.19px;top:905.00px;font-size:19.20px;color:#111318;letter-spacing:0.148px;-webkit-text-stroke:0.58px;">0 tài liệu</div>
<div class="t" style="left:1611.69px;top:614.00px;font-size:19.20px;color:#111318;letter-spacing:-0.173px;-webkit-text-stroke:0.58px;">Ảnh</div>
<div class="t" style="left:1976.59px;top:603.00px;font-size:19.20px;color:#111318;letter-spacing:-0.301px;-webkit-text-stroke:0.58px;">27.34 MB</div>
<div class="t" style="left:2017.40px;top:629.00px;font-size:15.10px;color:#808080;letter-spacing:-0.230px;">64 file</div>
<div class="t" style="left:1611.69px;top:690.00px;font-size:19.20px;color:#111318;letter-spacing:0.092px;-webkit-text-stroke:0.58px;">Video</div>
<div class="t" style="left:1976.59px;top:679.00px;font-size:19.20px;color:#111318;letter-spacing:-0.301px;-webkit-text-stroke:0.58px;">26.35 MB</div>
<div class="t" style="left:2025.40px;top:705.00px;font-size:15.10px;color:#808080;letter-spacing:-0.198px;">1 file</div>
<div class="t" style="left:1611.68px;top:766.00px;font-size:19.20px;color:#111318;letter-spacing:-0.250px;transform:scaleX(0.9787);transform-origin:0 0;-webkit-text-stroke:0.58px;">Văn bản</div>
<div class="t" style="left:1967.30px;top:756.00px;font-size:19.20px;color:#111318;letter-spacing:-0.250px;transform:scaleX(0.9835);transform-origin:0 0;-webkit-text-stroke:0.58px;">178.46 MB</div>
<div class="t" style="left:2009.00px;top:781.00px;font-size:15.10px;color:#808080;letter-spacing:-0.197px;">463 file</div>
<div class="t" style="left:1610.73px;top:843.00px;font-size:19.20px;color:#111318;letter-spacing:-0.250px;transform:scaleX(0.9473);transform-origin:0 0;-webkit-text-stroke:0.58px;">Khác</div>
<div class="t" style="left:1990.37px;top:832.00px;font-size:19.20px;color:#111318;letter-spacing:-0.250px;transform:scaleX(0.9464);transform-origin:0 0;-webkit-text-stroke:0.58px;">6.17 MB</div>
<div class="t" style="left:2025.40px;top:857.00px;font-size:15.10px;color:#808080;letter-spacing:-0.198px;">1 file</div>
<div class="t" style="left:408.17px;top:1059.00px;font-size:24.60px;color:#0f1115;letter-spacing:0.079px;-webkit-text-stroke:0.74px;">Top tài liệu được sử dụng nhiều nhất</div>
<div class="t" style="left:397.18px;top:1142.00px;font-size:19.20px;color:#6b6b6b;letter-spacing:-0.250px;transform:scaleX(0.9749);transform-origin:0 0;-webkit-text-stroke:0.58px;">Tài liệu</div>
<div class="t" style="left:1597.83px;top:1142.00px;font-size:19.20px;color:#6b6b6b;letter-spacing:-0.250px;transform:scaleX(0.9457);transform-origin:0 0;-webkit-text-stroke:0.58px;">Kích cỡ</div>
<div class="t" style="left:1813.89px;top:1142.00px;font-size:19.20px;color:#6b6b6b;letter-spacing:0.119px;-webkit-text-stroke:0.58px;">Người liên quan</div>
<div class="t" style="left:396.59px;top:1202.00px;font-size:19.20px;color:#2f3b52;letter-spacing:0.053px;-webkit-text-stroke:0.58px;">1. iNexx - Phan mem Truyen thong Noi bo.pptx</div>
<div class="t" style="left:396.14px;top:1228.00px;font-size:16.20px;color:#767676;letter-spacing:-0.250px;transform:scaleX(0.8602);transform-origin:0 0;">PPTX • APPLICATION/VND.OPENXMLFORMATS-OFFICEDOCUMENT.PRESENTATIONML.PRESENTATION</div>
<div class="t" style="left:1598.78px;top:1213.00px;font-size:19.20px;color:#46546a;letter-spacing:-0.250px;transform:scaleX(0.9809);transform-origin:0 0;-webkit-text-stroke:0.58px;">7.26 MB</div>
</body></html>
